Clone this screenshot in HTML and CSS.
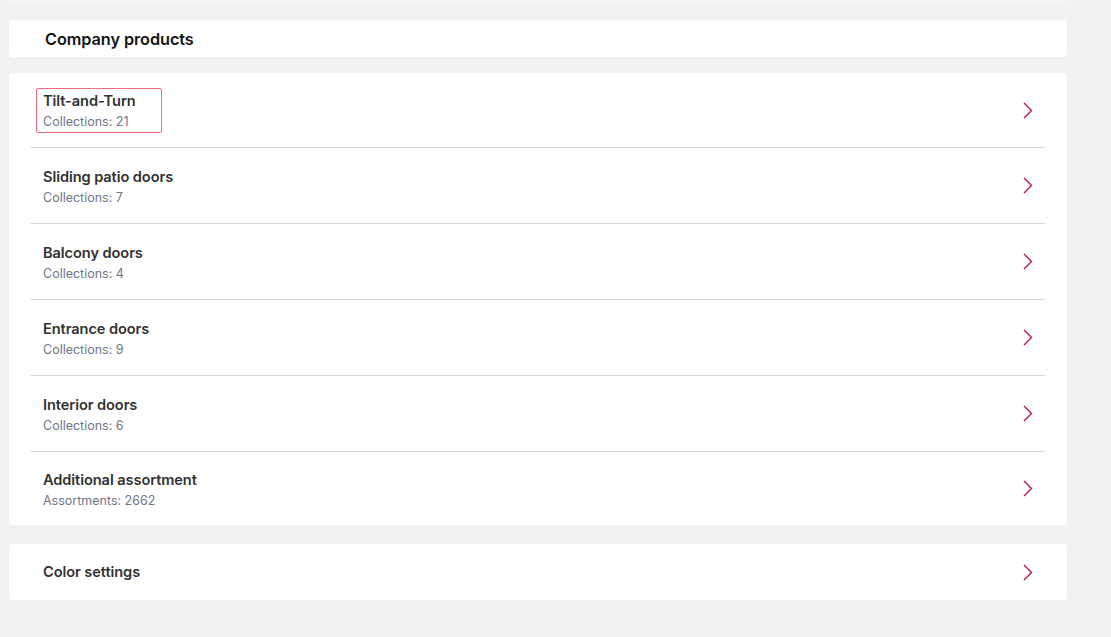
FILE: index.html
```html
<!DOCTYPE html>
<html lang="en">
<head>
<meta charset="utf-8">
<title>Company products</title>
<link rel="stylesheet" href="styles.css">
</head>
<body>
<div class="page">
  <div class="top-strip"></div>
  <div class="card header-card">
    <h1 class="header-title">Company products</h1>
  </div>

  <div class="card list-card">
    <div class="row">
      <div class="row-text">
        <div class="row-title">Tilt-and-Turn</div>
        <div class="row-sub">Collections: 21</div>
      </div>
      <span class="highlight"></span>
      <svg class="chevron" width="10" height="17" viewBox="0 0 10 17"><path d="M1 1 L8.5 8.5 L1 16" fill="none" stroke="#b8193c" stroke-width="1.4"/></svg>
    </div>
    <div class="row">
      <div class="row-text">
        <div class="row-title">Sliding patio doors</div>
        <div class="row-sub">Collections: 7</div>
      </div>
      <svg class="chevron" width="10" height="17" viewBox="0 0 10 17"><path d="M1 1 L8.5 8.5 L1 16" fill="none" stroke="#b8193c" stroke-width="1.4"/></svg>
    </div>
    <div class="row">
      <div class="row-text">
        <div class="row-title">Balcony doors</div>
        <div class="row-sub">Collections: 4</div>
      </div>
      <svg class="chevron" width="10" height="17" viewBox="0 0 10 17"><path d="M1 1 L8.5 8.5 L1 16" fill="none" stroke="#b8193c" stroke-width="1.4"/></svg>
    </div>
    <div class="row">
      <div class="row-text">
        <div class="row-title">Entrance doors</div>
        <div class="row-sub">Collections: 9</div>
      </div>
      <svg class="chevron" width="10" height="17" viewBox="0 0 10 17"><path d="M1 1 L8.5 8.5 L1 16" fill="none" stroke="#b8193c" stroke-width="1.4"/></svg>
    </div>
    <div class="row">
      <div class="row-text">
        <div class="row-title">Interior doors</div>
        <div class="row-sub">Collections: 6</div>
      </div>
      <svg class="chevron" width="10" height="17" viewBox="0 0 10 17"><path d="M1 1 L8.5 8.5 L1 16" fill="none" stroke="#b8193c" stroke-width="1.4"/></svg>
    </div>
    <div class="row">
      <div class="row-text">
        <div class="row-title">Additional assortment</div>
        <div class="row-sub">Assortments: 2662</div>
      </div>
      <svg class="chevron" width="10" height="17" viewBox="0 0 10 17"><path d="M1 1 L8.5 8.5 L1 16" fill="none" stroke="#b8193c" stroke-width="1.4"/></svg>
    </div>
  </div>

  <div class="card settings-card">
    <div class="settings-row">
      <div class="row-title">Color settings</div>
      <svg class="chevron" width="10" height="17" viewBox="0 0 10 17"><path d="M1 1 L8.5 8.5 L1 16" fill="none" stroke="#b8193c" stroke-width="1.4"/></svg>
    </div>
  </div>
</div>
</body>
</html>
```

FILE: styles.css
```css
* { box-sizing: border-box; }

html, body {
  margin: 0;
  padding: 0;
  background: #f1f1f1;
  font-family: Inter, "Noto Sans", "Liberation Sans", sans-serif;
}

.page {
  width: 1058px;
  margin-left: 9px;
  display: flex;
  flex-direction: column;
}

.top-strip {
  height: 3px;
  background: #f6f6f6;
  border-radius: 0 0 4px 4px;
  margin-bottom: 17px;
}

.card {
  background: #ffffff;
  border-radius: 4px;
}

.header-card {
  height: 37px;
  display: flex;
  align-items: center;
  padding-left: 36px;
}

.header-title {
  margin: 0;
  font-size: 16.3px;
  font-weight: 600;
  color: #141414;
  letter-spacing: -0.08px;
}

.list-card {
  margin-top: 16px;
  padding: 0 22px 0 21px;
  display: flex;
  flex-direction: column;
}

.row {
  position: relative;
  height: 76px;
  display: flex;
  align-items: center;
  justify-content: space-between;
  padding: 0 12px 0 13px;
  border-bottom: 1px solid #d9d9d9;
}

.row:first-child { height: 75px; }

.row:last-child {
  height: 73px;
  border-bottom: none;
}

.row-text {
  display: flex;
  flex-direction: column;
  gap: 2px;
  padding-top: 2px;
}

.row-title {
  font-size: 14.6px;
  line-height: 20px;
  font-weight: 600;
  color: #323232;
  letter-spacing: -0.08px;
}

.row-sub {
  font-size: 12.5px;
  line-height: 18px;
  color: #6f7788;
}

.chevron {
  display: block;
  flex-shrink: 0;
}

.highlight {
  position: absolute;
  left: 6px;
  top: 15px;
  width: 126px;
  height: 45px;
  border: 1.5px solid #f06b7c;
  border-radius: 2px;
  pointer-events: none;
}

.settings-card {
  margin-top: 19px;
  height: 56px;
  padding: 0 34px 0 34px;
}

.settings-row {
  height: 100%;
  display: flex;
  align-items: center;
  justify-content: space-between;
}
```
